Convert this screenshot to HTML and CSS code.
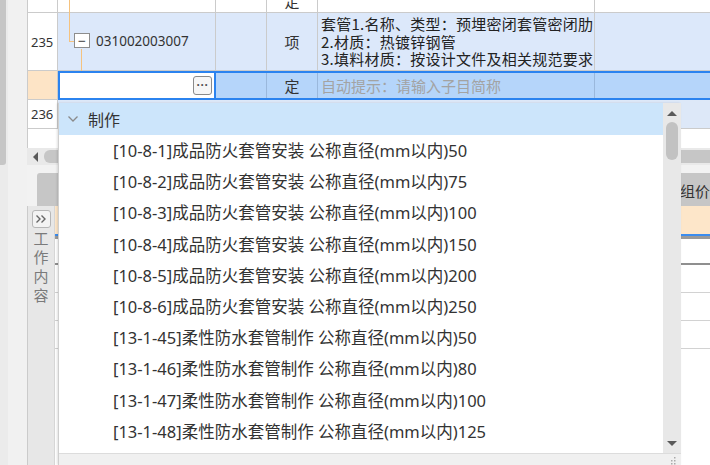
FILE: index.html
```html
<!DOCTYPE html>
<html lang="zh">
<head>
    <meta charset="UTF-8">
    <title>清单定额编辑</title>
    <link rel="stylesheet" href="styles.css">
</head>
<body>
    <div class="screen">
        <div class="vscroll"><div class="vthumb"></div></div>
        <div class="gutter"></div>
        <div class="main">
            <!-- 表格 -->
            <div class="row row-top">
                <div class="cell c-num"></div>
                <div class="cell c-code"><span class="tline tline-top"></span></div>
                <div class="cell c-w"></div>
                <div class="cell c-unit cut"><span>定</span></div>
                <div class="cell c-desc"></div>
                <div class="cell c-last"></div>
            </div>
            <div class="row row-235">
                <div class="cell c-num num">235</div>
                <div class="cell c-code">
                    <span class="tline tline-up"></span>
                    <span class="tline tline-h"></span>
                    <span class="tline tline-down"></span>
                    <span class="fold">&minus;</span>
                    <span class="code">031002003007</span>
                </div>
                <div class="cell c-w"></div>
                <div class="cell c-unit unit">项</div>
                <div class="cell c-desc desc">
                    <div>套管1.名称、类型：预埋密闭套管密闭肋</div>
                    <div>2.材质：热镀锌钢管</div>
                    <div>3.填料材质：按设计文件及相关规范要求</div>
                </div>
                <div class="cell c-last"></div>
            </div>
            <div class="row row-edit">
                <div class="cell c-num num-edit"></div>
                <div class="editor">
                    <button class="more">···</button>
                </div>
                <div class="selected">
                    <div class="cell c-w"></div>
                    <div class="cell c-unit unit">定</div>
                    <div class="cell c-desc hint">自动提示：请输入子目简称</div>
                    <div class="cell c-last"></div>
                </div>
            </div>
            <div class="row row-236">
                <div class="cell c-num num">236</div>
                <div class="cell c-rest"></div>
            </div>
            <div class="blank"></div>

            <!-- 横向滚动条 -->
            <div class="hscroll">
                <span class="arrow-left"></span>
                <div class="hthumb"></div>
            </div>
            <div class="strip"></div>

            <!-- 下方面板 -->
            <div class="lower">
                <div class="tabbar">
                    <div class="tab-head">
                        <div class="th-blank"></div>
                        <div class="th-cell">组价</div>
                    </div>
                </div>
                <div class="lower-body">
                    <div class="side">
                        <button class="expand">
                            <svg width="12" height="10" viewBox="0 0 12 10"><path d="M1.5 1.5L5 5L1.5 8.5M6.5 1.5L10 5L6.5 8.5" fill="none" stroke="#666" stroke-width="1.4"/></svg>
                        </button>
                        <div class="side-title">工作内容</div>
                    </div>
                    <div class="sub-grid">
                        <div class="sg-row sg-orange"></div>
                        <div class="sg-sel"></div>
                        <div class="sg-row sg-first"></div>
                        <div class="sg-row"></div>
                        <div class="sg-row"></div>
                        <div class="sg-row"></div>
                    </div>
                </div>
            </div>
        </div>

        <!-- 下拉提示列表 -->
        <div class="dropdown">
            <div class="dd-body">
                <div class="dd-list">
                    <div class="dd-group">
                        <svg class="chev" width="12" height="8" viewBox="0 0 12 8"><path d="M1.5 1.5L6 6L10.5 1.5" fill="none" stroke="#8a8a8a" stroke-width="1.3"/></svg>
                        <span>制作</span>
                    </div>
                    <div class="dd-item">[10-8-1]成品防火套管安装 公称直径(mm以内)50</div>
                    <div class="dd-item">[10-8-2]成品防火套管安装 公称直径(mm以内)75</div>
                    <div class="dd-item">[10-8-3]成品防火套管安装 公称直径(mm以内)100</div>
                    <div class="dd-item">[10-8-4]成品防火套管安装 公称直径(mm以内)150</div>
                    <div class="dd-item">[10-8-5]成品防火套管安装 公称直径(mm以内)200</div>
                    <div class="dd-item">[10-8-6]成品防火套管安装 公称直径(mm以内)250</div>
                    <div class="dd-item">[13-1-45]柔性防水套管制作 公称直径(mm以内)50</div>
                    <div class="dd-item">[13-1-46]柔性防水套管制作 公称直径(mm以内)80</div>
                    <div class="dd-item">[13-1-47]柔性防水套管制作 公称直径(mm以内)100</div>
                    <div class="dd-item">[13-1-48]柔性防水套管制作 公称直径(mm以内)125</div>
                </div>
                <div class="dd-scroll">
                    <span class="arrow-up"></span>
                    <div class="dd-thumb"></div>
                    <span class="arrow-down"></span>
                </div>
            </div>
            <div class="dd-foot">
                <svg width="6" height="8" viewBox="0 0 6 8"><rect x="4" y="0" width="1.5" height="1.5" fill="#aaa"/><rect x="4" y="3" width="1.5" height="1.5" fill="#aaa"/><rect x="1" y="3" width="1.5" height="1.5" fill="#aaa"/><rect x="4" y="6" width="1.5" height="1.5" fill="#aaa"/><rect x="1" y="6" width="1.5" height="1.5" fill="#aaa"/></svg>
            </div>
        </div>
    </div>
</body>
</html>
```

FILE: styles.css
```css
body {
    margin: 0;
    padding: 0;
    font-family: "Noto Sans", "Noto Sans CJK SC", sans-serif;
    color: #333;
    background-color: #fff;
}
.screen {
    position: relative;
    width: 710px;
    height: 465px;
    display: flex;
    overflow: hidden;
}
.vscroll {
    width: 8px;
    background-color: #ebebeb;
}
.vthumb {
    width: 6px;
    height: 165px;
    background-color: #c6c6c6;
    border-radius: 0 0 3px 0;
}
.gutter {
    width: 19px;
    background-color: #f1f1f1;
}
.main {
    flex: 1;
    display: flex;
    flex-direction: column;
    min-width: 0;
}

/* 表格 */
.row {
    display: flex;
    border-bottom: 1px solid #cbcbcb;
    box-sizing: border-box;
}
.cell {
    box-sizing: border-box;
    border-right: 1px solid #cbcbcb;
    position: relative;
}
.c-num { width: 31px; border-left: 1px solid #cbcbcb; }
.c-code { width: 158px; }
.c-w { width: 51px; }
.c-unit { width: 51px; }
.c-desc { width: 277px; }
.c-last { flex: 1; border-right: none; }
.c-rest { flex: 1; border-right: none; }

.row-top { height: 13px; }
.cut {
    display: flex;
    justify-content: center;
    align-items: flex-end;
    overflow: hidden;
    font-family: "Noto Sans CJK SC", sans-serif;
    font-size: 15px;
}
.cut span { line-height: 22px; }

.row-235 {
    height: 58px;
    background-color: #dce8fa;
}
.row-235 .c-num { background-color: #fff; }
.num {
    display: flex;
    align-items: center;
    padding-left: 3px;
    font-size: 13px;
    color: #333;
}
.row-235 .c-code {
    display: flex;
    align-items: center;
    padding-left: 16px;
}
.fold {
    width: 16px;
    height: 15px;
    box-sizing: border-box;
    border: 1px solid #8d8d8d;
    background-color: #fff;
    display: flex;
    align-items: center;
    justify-content: center;
    font-size: 14px;
    line-height: 1;
    color: #444;
    margin-right: 6px;
    margin-top: -2px;
}
.code {
    font-size: 13.5px;
    color: #333;
    margin-top: -2px;
}
.tline {
    position: absolute;
    background-color: #f5c27e;
}
.tline-top { left: 11px; top: 0; width: 1px; height: 13px; }
.tline-up { left: 11px; top: -1px; width: 1px; height: 29px; }
.tline-h { left: 11px; top: 28px; width: 5px; height: 1px; }
.tline-down { left: 23px; top: 36px; width: 1px; height: 22px; }
.unit {
    display: flex;
    align-items: center;
    justify-content: center;
    font-family: "Noto Sans CJK SC", sans-serif;
    font-size: 15px;
    color: #333;
}
.desc {
    display: flex;
    flex-direction: column;
    justify-content: center;
    padding-left: 3px;
    font-family: "Noto Sans CJK SC", sans-serif;
    font-size: 15px;
    line-height: 17.5px;
    letter-spacing: 0.25px;
    color: #222;
    white-space: nowrap;
    overflow: hidden;
}

.row-edit {
    height: 29px;
    border-bottom: none;
}
.num-edit {
    background-color: #fde4c6;
    border-bottom: 1px solid #cbcbcb;
}
.editor {
    width: 158px;
    box-sizing: border-box;
    border: 2px solid #2b83ef;
    background-color: #fff;
    display: flex;
    justify-content: flex-end;
    align-items: center;
    padding-right: 2px;
}
.more {
    width: 19px;
    height: 19px;
    padding: 0;
    border: 1px solid #8a8a8a;
    border-radius: 3px;
    background-color: #f6f6f6;
    font-size: 12px;
    font-weight: bold;
    line-height: 15px;
    color: #555;
}
.selected {
    flex: 1;
    display: flex;
    border-top: 2px solid #2b83ef;
    border-bottom: 2px solid #2b83ef;
    background-color: #b5d5fa;
}
.selected .cell { border-right-color: #9ab8dc; }
.hint {
    display: flex;
    align-items: center;
    padding-left: 3px;
    font-family: "Noto Sans CJK SC", sans-serif;
    font-size: 15px;
    color: #a3a3a3;
    white-space: nowrap;
}

.row-236 { height: 29px; }
.row-236 .c-rest { background-color: #dde8f8; }
.blank {
    height: 19px;
    border-left: 1px solid #cbcbcb;
}

/* 横向滚动条 */
.hscroll {
    height: 17px;
    background-color: #e9e9e9;
    display: flex;
    align-items: center;
    padding-left: 6px;
}
.arrow-left {
    width: 0;
    height: 0;
    border-top: 5px solid transparent;
    border-bottom: 5px solid transparent;
    border-right: 5px solid #5a5a5a;
}
.hthumb {
    flex: 1;
    height: 13px;
    margin-left: 6px;
    background-color: #c6c6c6;
    border-radius: 6px 0 0 6px;
}
.strip {
    height: 8px;
    background-color: #f2f2f2;
}

/* 下方面板 */
.lower {
    flex: 1;
    display: flex;
    flex-direction: column;
    background-color: #f2f2f2;
}
.tabbar {
    height: 33px;
    padding-left: 10px;
}
.tab-head {
    height: 100%;
    display: flex;
    background-color: #c6c6c6;
    border-radius: 3px 0 0 0;
}
.th-blank {
    width: 644px;
    border-right: 1px solid #b4b4b4;
}
.th-cell {
    padding: 7px 0 0 4px;
    font-family: "Noto Sans CJK SC", sans-serif;
    font-size: 15px;
    color: #333;
    white-space: nowrap;
}
.lower-body {
    flex: 1;
    display: flex;
}
.side {
    width: 28px;
    box-sizing: border-box;
    border-left: 1px solid #cbcbcb;
    border-right: 1px solid #d6d6d6;
    background-color: #e7e7e7;
    display: flex;
    flex-direction: column;
    align-items: center;
    padding-top: 4px;
}
.expand {
    width: 19px;
    height: 18px;
    padding: 0;
    border: 1px solid #b6b6b6;
    border-radius: 3px;
    background-color: #f3f3f3;
    display: flex;
    align-items: center;
    justify-content: center;
}
.side-title {
    writing-mode: vertical-rl;
    margin-top: 3px;
    font-family: "Noto Sans CJK SC", sans-serif;
    font-size: 15px;
    letter-spacing: 4px;
    color: #7a7a7a;
}
.sub-grid {
    flex: 1;
    display: flex;
    flex-direction: column;
    background-color: #fff;
}
.sg-orange {
    height: 25px;
    background-color: #fde6c9;
}
.sg-sel {
    height: 2px;
    background-color: #3c8def;
    border-bottom: 3px solid #9a9a9a;
}
.sg-row {
    height: 28px;
    border-bottom: 1px solid #d2d2d2;
    box-sizing: border-box;
}
.sg-orange { border-bottom: none; }
.sg-first {
    height: 26px;
    border-bottom: 2px solid #8f8f8f;
}

/* 下拉提示列表 */
.dropdown {
    position: absolute;
    left: 58px;
    top: 103px;
    width: 623px;
    height: 362px;
    display: flex;
    flex-direction: column;
    background-color: #fff;
    border-left: 1px solid #cfcfcf;
    box-shadow: -1px 0 2px rgba(0, 0, 0, 0.12);
    box-sizing: border-box;
}
.dd-body {
    flex: 1;
    display: flex;
    min-height: 0;
}
.dd-list {
    flex: 1;
    overflow: hidden;
}
.dd-group {
    height: 32px;
    display: flex;
    align-items: center;
    padding-left: 8px;
    background-color: #cce5fb;
    font-family: "Noto Sans CJK SC", sans-serif;
    font-size: 16px;
    color: #333;
}
.chev { margin-right: 9px; }
.dd-item {
    height: 31.2px;
    line-height: 31.2px;
    padding-left: 54px;
    font-size: 16.5px;
    color: #333;
    white-space: nowrap;
}
.dd-scroll {
    width: 18px;
    background-color: #e8e8e8;
    display: flex;
    flex-direction: column;
    align-items: center;
    padding-top: 8px;
    box-sizing: border-box;
}
.arrow-up {
    width: 0;
    height: 0;
    border-left: 5px solid transparent;
    border-right: 5px solid transparent;
    border-bottom: 5px solid #5a5a5a;
}
.dd-thumb {
    width: 12px;
    height: 38px;
    margin-top: 6px;
    background-color: #c2c2c2;
    border-radius: 6px;
}
.arrow-down {
    width: 0;
    height: 0;
    margin-top: auto;
    margin-bottom: 7px;
    border-left: 5px solid transparent;
    border-right: 5px solid transparent;
    border-top: 5px solid #5a5a5a;
}
.dd-foot {
    height: 11px;
    background-color: #f0f0f0;
    border-top: 1px solid #dcdcdc;
    display: flex;
    justify-content: flex-end;
    align-items: flex-end;
    padding-right: 5px;
}
```
